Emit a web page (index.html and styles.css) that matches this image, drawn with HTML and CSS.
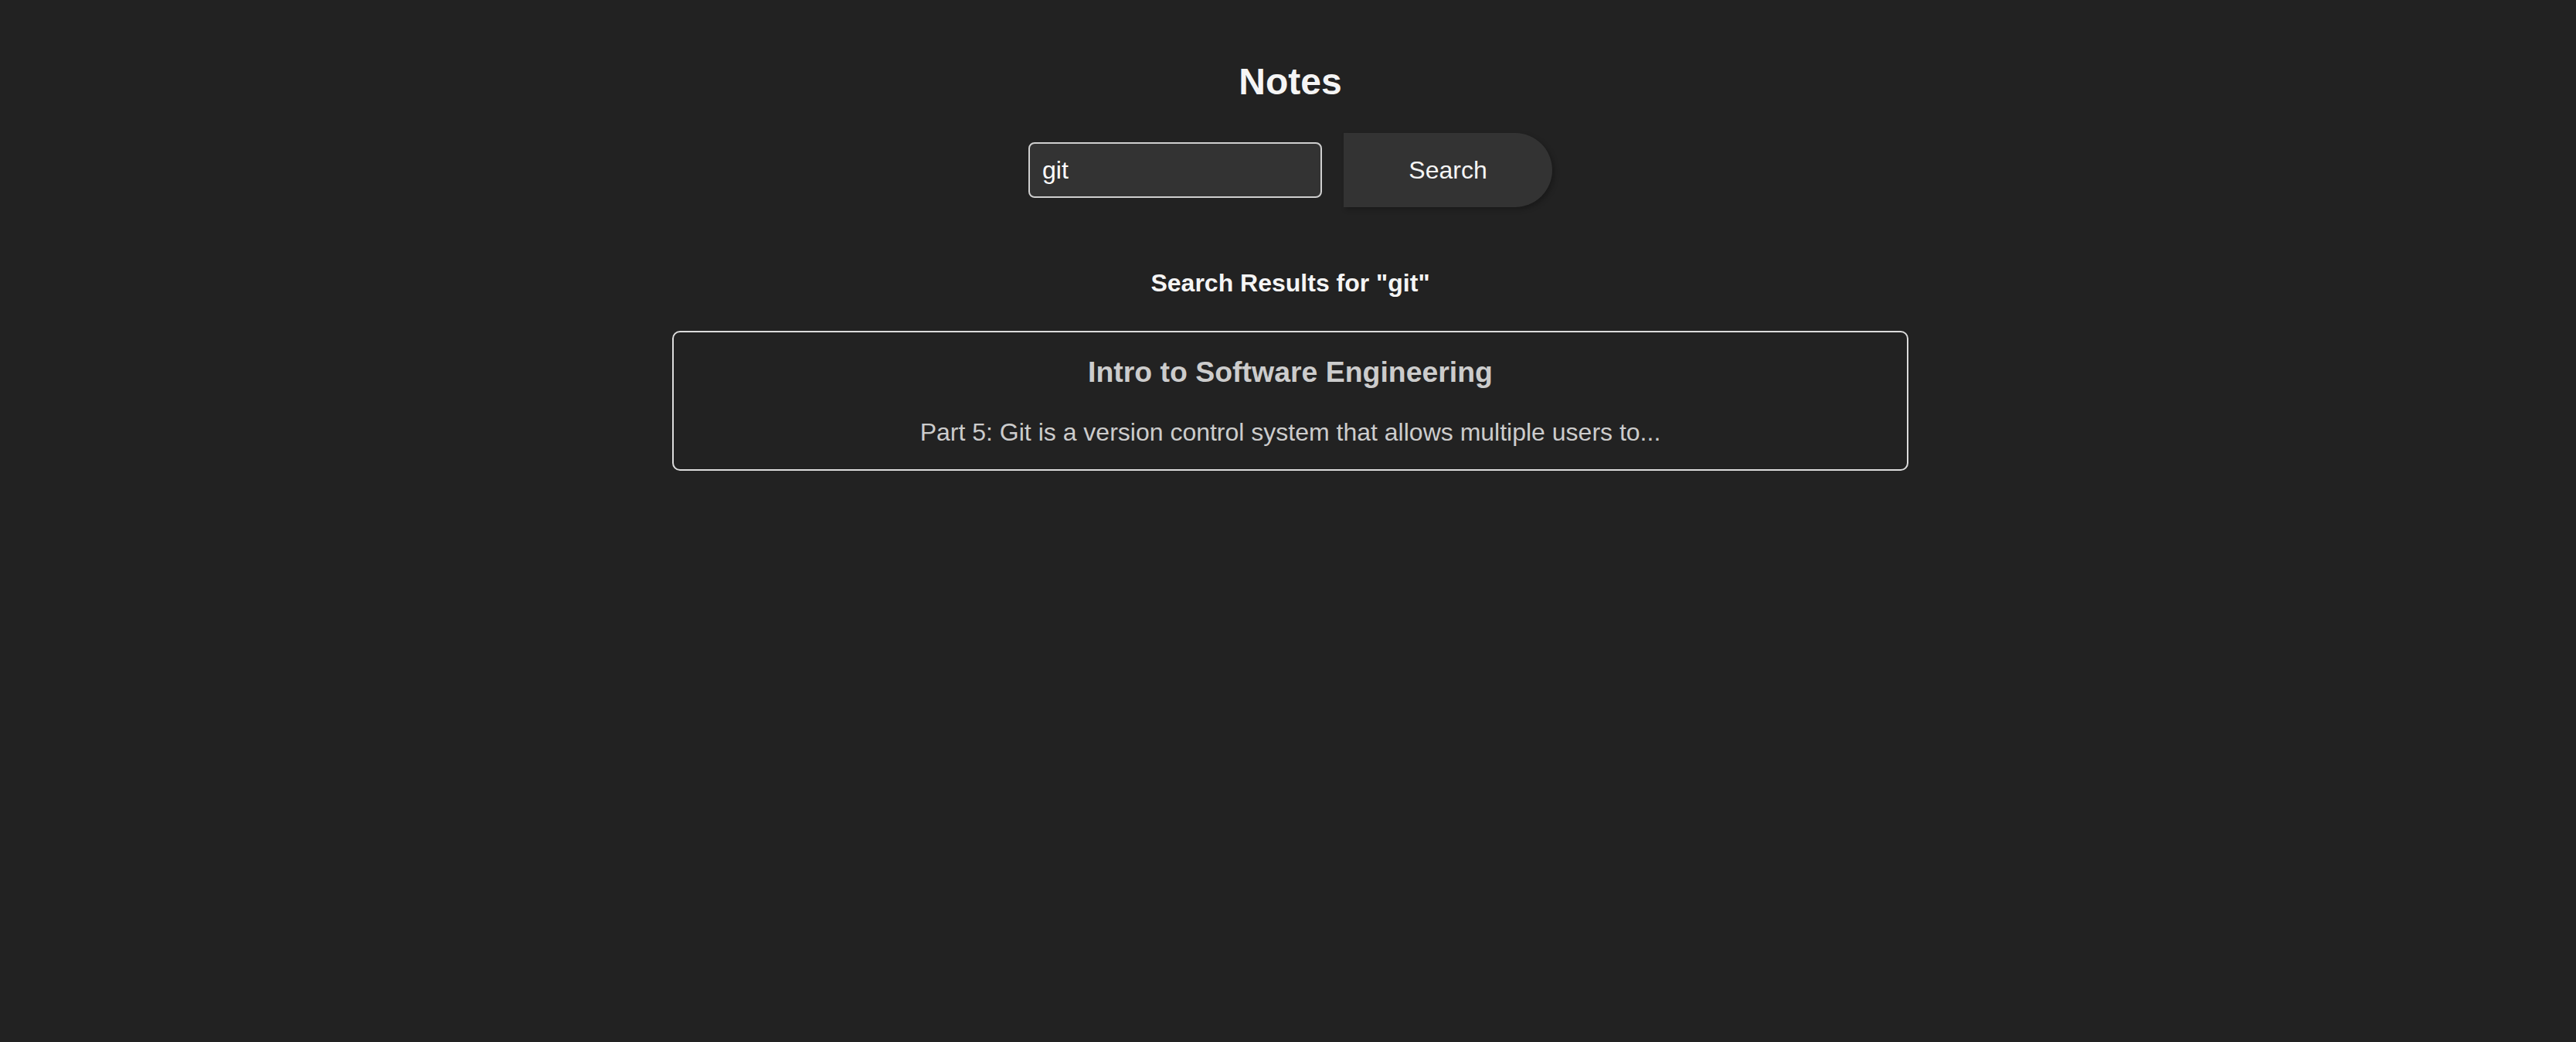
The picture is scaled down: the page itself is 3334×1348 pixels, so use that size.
FILE: index.html
```html
<!DOCTYPE html>
<html lang="en">
<head>
<meta charset="utf-8">
<title>Notes</title>
<link rel="stylesheet" href="styles.css">
</head>
<body>
<main class="page">
  <h2 class="page-title">Notes</h2>
  <form class="search-row">
    <input class="search-input" type="text" value="git">
    <button class="search-button" type="button">Search</button>
  </form>
  <h4 class="results-heading">Search Results for "git"</h4>
  <section class="result-card">
    <h3 class="result-title">Intro to Software Engineering</h3>
    <p class="result-snippet">Part 5: Git is a version control system that allows multiple users to...</p>
  </section>
</main>
</body>
</html>
```

FILE: styles.css
```css
html, body {
  margin: 0;
  padding: 0;
  background: #222222;
  height: 100%;
}

body {
  font-family: "Liberation Sans", Arial, sans-serif;
  color: #ffffff;
}

.page {
  display: flex;
  flex-direction: column;
  align-items: center;
  padding: 78px 0 0 6px;
}

.page-title {
  margin: 0;
  font-size: 48px;
  line-height: 56px;
  font-weight: bold;
  color: #f5f5f5;
}

.search-row {
  margin: 38px 0 0 0;
  display: flex;
  align-items: center;
  gap: 28px;
}

.search-input {
  box-sizing: border-box;
  width: 380px;
  height: 72px;
  padding: 0 16px;
  border: 2px solid #cfcfcf;
  border-radius: 8px;
  background: #333333;
  color: #ffffff;
  font-family: "Liberation Sans", Arial, sans-serif;
  font-size: 32px;
  outline: none;
}

.search-button {
  box-sizing: border-box;
  width: 270px;
  height: 96px;
  border: none;
  border-radius: 0 48px 48px 0;
  background: #333333;
  color: #f5f5f5;
  font-family: "Liberation Sans", Arial, sans-serif;
  font-size: 32px;
  box-shadow: 3px 3px 6px rgba(0, 0, 0, 0.25);
  cursor: pointer;
}

.results-heading {
  margin: 80px 0 0 0;
  font-size: 32px;
  line-height: 37px;
  font-weight: bold;
  color: #f5f5f5;
}

.result-card {
  box-sizing: border-box;
  width: 1600px;
  margin-top: 43px;
  padding: 30px 20px 29px;
  border: 2px solid #dcdcdc;
  border-radius: 10px;
  text-align: center;
}

.result-title {
  margin: 0 0 38px 0;
  font-size: 37.44px;
  line-height: 43px;
  font-weight: bold;
  color: #cccccc;
}

.result-snippet {
  margin: 0;
  font-size: 32px;
  line-height: 37px;
  color: #cccccc;
}
```
